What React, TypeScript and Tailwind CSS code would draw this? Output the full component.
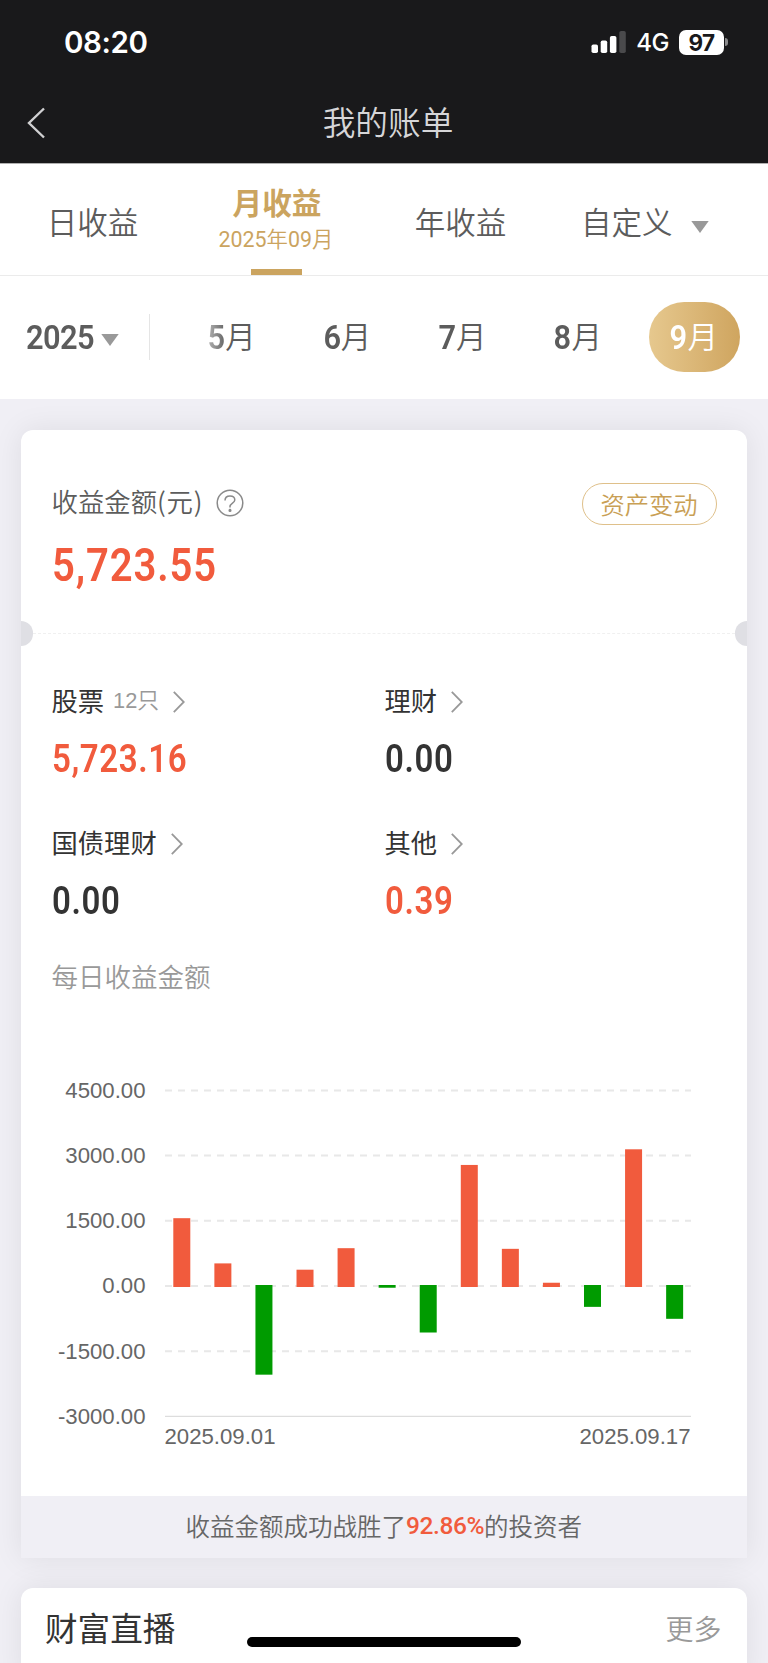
import { useState } from 'react'

const cjk = "font-['Noto_Sans_CJK_SC',sans-serif]"
const din = "font-['Roboto','Noto_Sans_CJK_SC',sans-serif]"

const months = [5, 6, 7, 8, 9]

const categories = [
  { name: '股票', count: '12只', value: '5,723.16', up: true },
  { name: '理财', value: '0.00', up: false },
  { name: '国债理财', value: '0.00', up: false },
  { name: '其他', value: '0.39', up: true },
]

const daily = [1560, 520, -2040, 375, 870, -40, -1070, 2785, 855, 75, -480, 3145, -755]
const ticks = [4500, 3000, 1500, 0, -1500, -3000]

function StatusBar() {
  return (
    <div className="flex h-[84px] items-center justify-between pl-[64px] pr-[40px]">
      <span className="font-['Inter',sans-serif] text-[29.5px] font-semibold leading-[36px] tracking-[-0.4px] text-white">08:20</span>
      <div className="flex items-center">
        <svg width="36" height="22" viewBox="0 0 36 22" className="mr-[9px]">
          <rect x="0.5" y="13.5" width="6.5" height="8.5" rx="1.8" fill="#fff" />
          <rect x="9.7" y="9.5" width="6.5" height="12.5" rx="1.8" fill="#fff" />
          <rect x="18.9" y="5" width="6.5" height="17" rx="1.8" fill="#fff" />
          <rect x="28.3" y="0" width="6.5" height="22" rx="1.8" fill="#4a4a4c" />
        </svg>
        <span className="mr-[10px] mt-[2px] font-['Inter',sans-serif] text-[24px] font-medium leading-[28px] tracking-[-0.5px] text-white">4G</span>
        <div className="flex h-[25px] w-[45px] items-center justify-center rounded-[7px] bg-white font-['Inter',sans-serif] text-[22.5px] font-bold leading-[25px] tracking-[-0.6px] text-[#19191b]">
          97
        </div>
        <div className="ml-px h-[8px] w-[3px] rounded-r-full bg-[#8a8a8c]" />
      </div>
    </div>
  )
}

function Triangle() {
  return (
    <svg width="18" height="12" viewBox="0 0 18 12">
      <path d="M0.3 0H17.7L9 12Z" fill="#999" />
    </svg>
  )
}

function Chevron() {
  return (
    <svg width="12" height="22" viewBox="0 0 12 22" fill="none" stroke="#999" strokeWidth="1.8">
      <path d="M0.8 0.8L10.8 11L0.8 21.2" />
    </svg>
  )
}

function DailyChart() {
  const y = (v: number) => 240 - (v / 1500) * 65.2
  return (
    <svg width="726" height="420" viewBox="21 0 726 420" className="block font-['Liberation_Sans',Arial,sans-serif] text-[22.2px]" fill="#666">
      {ticks.map((t) => (
        <g key={t}>
          <text x="145.5" y={y(t) + 7.4} textAnchor="end">{t.toFixed(2)}</text>
          <line
            x1="165"
            x2="691"
            y1={y(t)}
            y2={y(t)}
            stroke={t === -3000 ? '#ddd' : '#e8e8e8'}
            strokeWidth={t === -3000 ? 1.4 : 2}
            strokeDasharray={t === -3000 ? undefined : '7 6'}
          />
        </g>
      ))}
      {daily.map((v, i) => (
        <rect
          key={i}
          x={173.3 + i * 41.07}
          y={v > 0 ? y(v) : y(0) - 1}
          width="17"
          height={v > 0 ? y(0) + 1 - y(v) : y(v) - y(0) + 1}
          fill={v > 0 ? '#f15b3d' : '#009b00'}
        />
      ))}
      <text x="164.5" y="398.4">2025.09.01</text>
      <text x="690.5" y="398.4" textAnchor="end">2025.09.17</text>
    </svg>
  )
}

export default function App() {
  const [month, setMonth] = useState(9)

  return (
    <div className={`flex h-[1663px] w-[768px] flex-col overflow-hidden bg-[#f0eff5] ${cjk}`}>
      <header className="h-[163px] shrink-0 bg-[#19191b]">
        <StatusBar />
        <div className="grid h-[78px] grid-cols-[100px_1fr_92px] items-center">
          <svg width="20" height="32" viewBox="0 0 20 32" className="ml-[26px]" fill="none" stroke="#d0d0d2" strokeWidth="2.4">
            <path d="M18 1.5L3 16L18 30.5" />
          </svg>
          <h1 className="pb-[4px] text-center text-[32.7px] font-[350] leading-[40px] text-[#d6d6d8]">我的账单</h1>
        </div>
      </header>

      <nav className="flex h-[113px] shrink-0 border-b border-t border-b-[#ebebeb] border-t-[#b0b0b0] bg-white text-[30.5px] font-[350] text-[#5c5c5c]">
        <div className="flex w-[184px] items-center justify-center pl-px pt-[5px]">日收益</div>
        <div className="flex w-[184px] flex-col items-center text-[#cba45f]">
          <div className="mt-[18px] pl-[2px] text-[29.7px] font-bold leading-[40px]">月收益</div>
          <div className={`mt-[3px] text-[21.4px] leading-[30px] ${din}`}>
            <span className="font-normal">2025</span>年<span className="font-normal">09</span>月
          </div>
          <div className="mt-auto h-[6px] w-[51px] bg-[#cba45f]" />
        </div>
        <div className="flex w-[184px] items-center justify-center pl-px pt-[5px]">年收益</div>
        <div className="flex flex-1 items-center pl-[29px] pt-[5px]">
          自定义
          <span className="ml-[18px] mt-[9px]"><Triangle /></span>
        </div>
      </nav>

      <div className="flex h-[123px] shrink-0 items-center bg-white pb-px text-[#5c5c5c]">
        <div className="flex w-[150px] items-center border-r border-[#e5e5e5] pl-[26px] leading-[44px]">
          <span className={`mt-[2px] w-[67px] origin-left scale-x-[0.92] text-[33.5px] font-semibold tracking-[-0.7px] ${din}`}>2025</span>
          <span className="ml-[8px] mt-[6px] flex"><Triangle /></span>
        </div>
        <div className="flex flex-1 gap-[24.4px] pl-[37px]">
          {months.map((m) => (
            <button
              key={m}
              onClick={() => setMonth(m)}
              className={
                m === month
                  ? 'flex h-[70px] w-[91px] items-center justify-center rounded-[35px] bg-linear-to-r from-[#e6c88e] to-[#cfa55f] pr-[2px] text-white'
                  : 'flex h-[70px] w-[91px] items-center justify-center pr-[3px]'
              }
            >
              <span
                className={
                  m === 5
                    ? `mt-[2px] origin-right scale-x-[0.92] bg-linear-to-r from-[#b4b4b4] to-[#666] bg-clip-text text-[33.5px] font-semibold text-transparent ${din}`
                    : `mt-[2px] origin-right scale-x-[0.92] text-[33.5px] font-semibold ${din}`
                }
              >
                {m}
              </span>
              <span className="mb-[2px] text-[30.5px] font-[350]">月</span>
            </button>
          ))}
        </div>
      </div>

      <section className="ml-[20.5px] mr-[21px] mt-[31px] h-[1128px] shrink-0 rounded-t-[12px] bg-white shadow-[0_0_30px_rgba(0,0,0,0.08)]">
        <div className="flex h-[191px] justify-between pl-[31px] pr-[30.5px]">
          <div>
            <div className="mt-[51px] flex items-center text-[26.4px] font-[350] leading-[40px] text-[#5c5c5c]">
              收益金额<span className="tracking-[0.8px]">(元)</span>
              <svg width="28" height="28" viewBox="0 0 28 28" className="ml-[13px] mt-[3px]" fill="none" stroke="#8a8a8a" strokeWidth="1.5">
                <circle cx="14" cy="14" r="12.8" />
                <path d="M9 11.6C9 8.6 11 7 14 7C17 7 18.8 8.7 18.8 11C18.8 14 14 14.2 14 17.6V18.6" />
                <circle cx="14" cy="21.4" r="0.8" fill="#8a8a8a" />
              </svg>
            </div>
            <div className={`mt-[16px] w-fit origin-left scale-x-[0.87] text-[46px] font-semibold leading-[56px] tracking-[1px] text-[#f15b3d] ${din}`}>5,723.55</div>
          </div>
          <button className="mt-[53px] h-[42px] w-[135px] rounded-full border border-[#dfc08a] text-[24.3px] font-[350] leading-[38px] text-[#c99f55]">资产变动</button>
        </div>

        <div className="flex h-[25px] items-center justify-between overflow-hidden">
          <div className="h-[25px] w-[12px] rounded-r-full bg-[#dfdfe4]" />
          <div className="flex-1 border-t border-dashed border-[#f0f0f0]" />
          <div className="h-[25px] w-[12px] rounded-l-full bg-[#dfdfe4]" />
        </div>

        <div className="mt-[35px] grid grid-cols-[333px_1fr] pl-[31px]">
          {categories.map((c) => (
            <div key={c.name} className="h-[142px]">
              <div className="flex h-[38px] items-center text-[26.3px] leading-[38px] text-[#333]">
                <span>{c.name}</span>
                {c.count && <span className="ml-[9px] mt-[2px] font-['Liberation_Sans','Noto_Sans_CJK_SC',sans-serif] text-[21.8px] font-[350] text-[#999]">{c.count}</span>}
                <span className="ml-[14px] mt-[3px] flex"><Chevron /></span>
              </div>
              <div className={`mt-[18px] w-fit origin-left scale-x-[0.87] text-[38px] font-semibold leading-[44px] tracking-[0.7px] ${din} ${c.up ? 'text-[#f15b3d]' : 'text-[#333]'}`}>
                {c.value}
              </div>
            </div>
          ))}
        </div>
        <div className="-mt-[9px] pl-[31px] text-[26.5px] font-[350] leading-[40px] text-[#999]">每日收益金额</div>

        <div className="mt-[50px] h-[450px]">
          <DailyChart />
        </div>

        <div className="flex h-[62px] items-center justify-center bg-[#f0eff5] pb-[2px] text-[24.5px] font-[350] text-[#666]">
          收益金额成功战胜了
          <span className={`mt-px text-[24.5px] font-medium tracking-[-0.4px] text-[#f15b3d] ${din}`}>92.86%</span>
          的投资者
        </div>
      </section>

      <section className="relative ml-[20.5px] mr-[21px] mt-[30px] h-[90px] shrink-0 rounded-t-[12px] bg-white shadow-[0_0_30px_rgba(0,0,0,0.08)]">
        <div className="flex h-[80px] items-center justify-between pl-[24.5px] pr-[25.5px]">
          <h2 className="pb-[2px] text-[32.6px] text-[#333]">财富直播</h2>
          <span className="pb-px text-[28px] font-[350] text-[#999]">更多</span>
        </div>
        <div className="absolute left-[226.5px] top-[49px] h-[10px] w-[274px] rounded-full bg-black" />
      </section>
    </div>
  )
}
